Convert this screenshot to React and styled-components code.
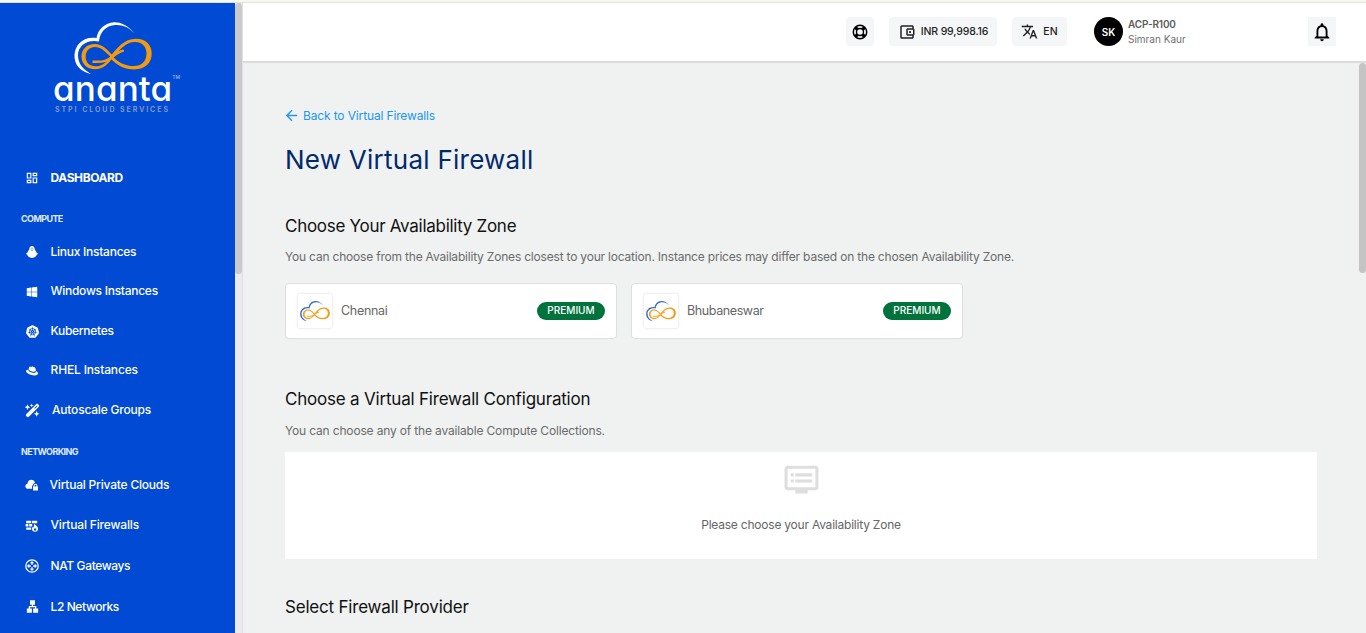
import React from 'react';
import styled, { createGlobalStyle } from 'styled-components';
import {
  MdOutlineDashboard, MdTranslate, MdNotificationsNone, MdDvr,
  MdOutlineAccountBalanceWallet, MdLan, MdArrowBack,
} from 'react-icons/md';
import { FaWindows, FaRedhat } from 'react-icons/fa';
import { FaWandMagicSparkles } from 'react-icons/fa6';
import { SiKubernetes } from 'react-icons/si';

const Global = createGlobalStyle`
  * { box-sizing: border-box; }
  html, body { margin: 0; height: 100%; overflow: hidden; }
  body { font-family: Inter, "Liberation Sans", sans-serif; background: #f0f2f2; }
  svg { display: block; flex: none; }
`;

const Page = styled.div`
  height: 633px;
  display: flex;
  flex-direction: column;
`;
const TopStrip = styled.div`
  flex: none;
  height: 3px;
  background: #f7f9f0;
  border-bottom: 1px solid #dfe4d0;
`;
const Shell = styled.div`
  flex: 1;
  min-height: 0;
  display: flex;
`;
const Sidebar = styled.aside`
  width: 235px;
  flex: none;
  background: #004ad4;
  color: #fff;
  overflow: hidden;
`;
const Track = styled.div`
  flex: none;
  width: ${(p) => p.$w}px;
  background: ${(p) => p.$bg};
`;
const Thumb = styled.div`
  height: ${(p) => p.$h}px;
  background: ${(p) => p.$c};
  border-radius: 4px;
`;
const Brand = styled.div`
  height: 159px;
  padding: 19px 0 0 53px;
`;
const BrandMark = styled.div`
  padding-left: 21px;
  height: 51px;
`;
const BrandName = styled.div`
  display: flex;
  height: 30px;
  font-size: 35px;
  line-height: 30px;
  font-weight: 500;
  font-feature-settings: "cv11";
  letter-spacing: 0.1px;
`;
const Tm = styled.span`
  font-size: 5px;
  line-height: 8px;
  letter-spacing: 0;
  color: #9dbcf2;
`;
const BrandTag = styled.div`
  margin-top: 2px;
  padding-left: 2px;
  font-size: 7px;
  line-height: 9px;
  font-weight: 600;
  letter-spacing: 1.95px;
  color: #8c9fc6;
  white-space: nowrap;
`;
const NavGroup = styled.div`
  display: flex;
  flex-direction: column;
`;
const NavItem = styled.a`
  display: flex;
  align-items: center;
  height: ${(p) => p.$h || 39.5}px;
  padding-left: 24px;
  font-size: 12px;
  font-weight: ${(p) => (p.$bold ? 700 : 500)};
  letter-spacing: ${(p) => p.$ls || 0}px;
  white-space: nowrap;
`;
const NavText = styled.span`
  padding-bottom: 1.5px;
`;
const IconSlot = styled.span`
  width: 16px;
  margin-right: ${(p) => p.$gap || 10.5}px;
  display: flex;
  justify-content: center;
`;
const NavLabel = styled.div`
  height: ${(p) => p.$h}px;
  padding: ${(p) => p.$pt}px 0 0 21px;
  font-size: 9px;
  line-height: 12px;
  font-weight: 700;
  letter-spacing: -0.6px;
  color: #dfe9fb;
`;
const Main = styled.main`
  flex: 1;
  min-width: 0;
  display: flex;
  flex-direction: column;
  border-left: 1px solid #dfe1e6;
`;
const Header = styled.header`
  flex: none;
  height: 60px;
  background: #fff;
  border-bottom: 2px solid #dcdcdc;
  display: flex;
  align-items: center;
  padding: 0 30px 1px 603px;
`;
const Chip = styled.div`
  height: 29px;
  width: ${(p) => p.$w}px;
  margin-right: ${(p) => p.$mr || 0}px;
  display: flex;
  align-items: center;
  justify-content: center;
  gap: 5px;
  background: #f5f6f8;
  border-radius: ${(p) => (p.$square ? 0 : 4)}px;
  font-size: 10.5px;
  font-weight: 500;
  letter-spacing: ${(p) => p.$ls || 0}px;
  color: #222;
  white-space: nowrap;
`;
const Avatar = styled.div`
  width: 29px;
  height: 29px;
  border-radius: 50%;
  background: #000;
  color: #fff;
  font-size: 10px;
  font-weight: 600;
  display: flex;
  align-items: center;
  justify-content: center;
`;
const User = styled.div`
  flex: 1;
  padding-left: 5px;
  font-size: 10px;
  line-height: 15px;
  color: #707070;
`;
const UserId = styled.div`
  font-weight: 600;
  letter-spacing: -0.15px;
  color: #5c5c5c;
`;
const Body = styled.div`
  flex: 1;
  min-height: 0;
  display: flex;
`;
const Content = styled.div`
  flex: 1;
  padding: 43px 42px 0;
  overflow: hidden;
`;
const Back = styled.a`
  display: flex;
  align-items: center;
  gap: 3px;
  height: 18px;
  margin-left: -2px;
  font-size: 12px;
  letter-spacing: -0.14px;
  color: #2196f3;
`;
const Title = styled.h1`
  margin: 19px 0 0;
  font-size: 26px;
  line-height: 34px;
  font-weight: 400;
  letter-spacing: 0.25px;
  color: #022a6b;
`;
const Heading = styled.h2`
  margin: ${(p) => p.$mt}px 0 0;
  font-size: 17px;
  line-height: 24px;
  font-weight: 400;
  letter-spacing: ${(p) => p.$ls || 0}px;
  color: #111;
`;
const Note = styled.p`
  margin: ${(p) => p.$mt || 10}px 0 0;
  font-size: 12px;
  line-height: 18px;
  letter-spacing: ${(p) => p.$ls || 0}px;
  color: #6b6b6b;
  white-space: nowrap;
`;
const Zones = styled.div`
  display: flex;
  gap: 14px;
  margin-top: 17px;
`;
const ZoneCard = styled.div`
  width: 332px;
  height: 56px;
  padding: 0 11px 0 12px;
  display: flex;
  align-items: center;
  background: #fff;
  border: 1px solid #dcdedf;
  border-radius: 4px;
`;
const ZoneLogo = styled.div`
  width: 34px;
  height: 34px;
  display: flex;
  align-items: center;
  justify-content: center;
  border-radius: 2px;
  box-shadow: 0 0 3px rgba(0, 0, 0, 0.16);
`;
const ZoneName = styled.div`
  flex: 1;
  padding: 0 0 2px 9px;
  font-size: 12.5px;
  letter-spacing: ${(p) => p.$ls}px;
  color: #666;
`;
const Badge = styled.div`
  width: 68px;
  height: 18px;
  border-radius: 9px;
  background: #00723c;
  color: #fff;
  font-size: 10px;
  line-height: 17px;
  font-weight: 500;
  text-align: center;
`;
const Empty = styled.div`
  width: 1032px;
  height: 107px;
  margin-top: 12px;
  padding-top: 9px;
  display: flex;
  flex-direction: column;
  align-items: center;
  background: #fff;
  color: #dedede;
`;
const EmptyText = styled.div`
  margin-top: 18px;
  font-size: 12px;
  line-height: 18px;
  letter-spacing: -0.22px;
  color: #666;
`;

const CloudLoop = ({ width, cloud, loop }) => (
  <svg width={width} height={(width * 52) / 78} viewBox="0 0 78 52">
    <path fill={cloud} d="M61 12C54 3 46 0 40 .3C31 1 24 7 22.500 16C10 14 1 22 .5 33C0 43 7 50 17 52C9 47 4 42 4 33C4 24 13 17 25 19.500C26 9 33 3.500 41 3C48 2.500 55 5 61 12Z" />
    <path fill={loop} fillRule="evenodd" d="M39.500 34.500C33 27 28 22 21 22C12.500 22 7.500 27.500 7.500 34.500C7.500 42 13 47.200 21 47.200C29 47.200 34.500 42 39.500 34.500ZM36.500 35C32 41 27.500 44.300 21.500 44.300C15.500 44.300 11.700 40.500 11.700 34.500C11.700 29 15.500 25 21 25C26.500 25 31 29 36.500 35Z" />
    <path fill={loop} fillRule="evenodd" d="M35.500 35.500C43 26 50 16.700 62 16.700C71.500 16.700 77.700 22.500 77.700 31.500C77.700 41 71 47.400 60.500 47.400C50 47.400 43 43.500 35.500 35.500ZM39 35C46 41.500 52 44 59.500 44C67.500 44 72.500 39.500 72.500 31.500C72.500 24.500 68 20 61 20C52 20 46 27.500 39 35Z" />
    <path fill="none" stroke={loop} strokeWidth="2.500" strokeLinecap="round" d="M19.500 39.700C30 40.300 34 38.500 38.500 34.800C42 32 45 29.500 48.800 28.800" />
  </svg>
);

const LifebuoyIcon = () => (
  <svg width="16" height="16" viewBox="0 0 16 16" fill="none" stroke="#000">
    <circle cx="8" cy="8" r="6.700" strokeWidth="1.500" />
    <circle cx="8" cy="8" r="3.500" strokeWidth="1.400" />
    <path strokeWidth="3.200" d="M3.300 3.300L5.500 5.500M12.700 3.300L10.500 5.500M3.300 12.700L5.500 10.500M12.700 12.700L10.500 10.500" />
  </svg>
);
const PenguinIcon = () => (
  <svg width="12" height="12" viewBox="0 0 12 12">
    <path fill="#fff" d="M6 0C4.200 0 3.300 1.400 3.300 3C3.300 4 1.900 4.900 1.500 6.400L.2 7.500C-.1 8 .5 8.500 1.200 8.600C1.400 10.300 3.200 12 6 12S10.600 10.300 10.800 8.600C11.500 8.500 12.100 8 11.800 7.500L10.500 6.400C10.100 4.900 8.700 4 8.700 3C8.700 1.400 7.800 0 6 0Z" />
    <path fill="#004ad4" d="M4.700 2.600h.9v1h-.9zM6.400 2.600h.9v1h-.9zM5 4.100h2L6 4.800z" />
  </svg>
);
const CloudLockIcon = () => (
  <svg width="14" height="12" viewBox="0 0 14 12">
    <path fill="#fff" d="M7 9.800H3.200C1.300 9.800.4 8.600.4 7.200C.4 5.900 1.400 5 2.500 4.800C2.700 2.300 4.200.8 6.200.8C8.200.8 9.600 2 10 4C8.600 4.300 7.600 5.300 7.600 6.600C7.100 6.900 7 7.300 7 8Z" />
    <path fill="#fff" fillRule="evenodd" d="M8 7.400h.6v-.7a1.900 1.900 0 0 1 3.800 0v.7h.6v4.200H8zM9.600 7.400h1.800v-.7a.9.900 0 0 0-1.800 0z" />
  </svg>
);
const FirewallIcon = () => (
  <svg width="14" height="12" viewBox="0 0 14 12">
    <path fill="#fff" d="M1.200.8h5v2.400h-5zM7 .8h5.200v2.400H7zM.6 4h2.800v2.500H.6zM4.200 4h3v2.500h-3zM1.200 7.400h5v2.400h-5z" />
    <path fill="#fff" fillRule="evenodd" d="M9.600 3.800c.4 1.300 3.400 2.400 3.400 5A3 3 0 0 1 7 8.800c0-1 .5-1.800 1.200-2.400c.1.600.3.900.7 1.100c-.1-1.400 0-2.700.7-3.700zM10.100 7.800l-1.200 1.800a1.200 1.200 0 0 0 2.400 0z" />
  </svg>
);
const GatewayIcon = () => (
  <svg width="14" height="14" viewBox="0 0 14 14">
    <circle cx="7" cy="7" r="6.200" fill="none" stroke="#fff" strokeWidth="1.300" />
    <path fill="#fff" d="M7 1.900L9.200 4.300H7.700V5.800H6.300V4.300H4.800zM7 12.100L4.800 9.700H6.300V8.200H7.700V9.700H9.200zM1.900 7L4.300 4.800V6.300H5.800V7.700H4.300V9.200zM12.100 7L9.700 9.200V7.700H8.200V6.300H9.700V4.800z" />
  </svg>
);

const compute = [
  { label: 'Linux Instances', icon: <PenguinIcon />, ls: -0.26 },
  { label: 'Windows Instances', icon: <FaWindows size={12} />, ls: -0.27 },
  { label: 'Kubernetes', icon: <SiKubernetes size={13} />, ls: -0.3 },
  { label: 'RHEL Instances', icon: <FaRedhat size={12} />, ls: -0.15 },
  { label: 'Autoscale Groups', icon: <FaWandMagicSparkles size={15} />, gap: 12, ls: -0.2 },
];
const networking = [
  { label: 'Virtual Private Clouds', icon: <CloudLockIcon />, gap: 9.5, ls: -0.2 },
  { label: 'Virtual Firewalls', icon: <FirewallIcon />, ls: -0.17 },
  { label: 'NAT Gateways', icon: <GatewayIcon />, ls: -0.37 },
  { label: 'L2 Networks', icon: <MdLan size={15} />, ls: -0.4 },
];

const NavList = ({ items, h }) => (
  <NavGroup>
    {items.map((i) => (
      <NavItem key={i.label} $h={h} $ls={i.ls}>
        <IconSlot $gap={i.gap}>{i.icon}</IconSlot>
        <NavText>{i.label}</NavText>
      </NavItem>
    ))}
  </NavGroup>
);

const Zone = ({ name, ls }) => (
  <ZoneCard>
    <ZoneLogo><CloudLoop width={30} cloud="#2a66d9" loop="#f79a10" /></ZoneLogo>
    <ZoneName $ls={ls}>{name}</ZoneName>
    <Badge>PREMIUM</Badge>
  </ZoneCard>
);

export default function App() {
  return (
    <Page>
      <Global />
      <TopStrip />
      <Shell>
        <Sidebar>
          <Brand>
            <BrandMark><CloudLoop width={78} cloud="#fff" loop="#f59a0c" /></BrandMark>
            <BrandName>ananta<Tm>TM</Tm></BrandName>
            <BrandTag>STPI CLOUD SERVICES</BrandTag>
          </Brand>
          <NavItem $h={32} $bold $ls={-0.4}>
            <IconSlot><MdOutlineDashboard size={14} /></IconSlot>
            <NavText>DASHBOARD</NavText>
          </NavItem>
          <NavLabel $h={38.25} $pt={19}>COMPUTE</NavLabel>
          <NavList items={compute} h={39.5} />
          <NavLabel $h={35} $pt={16.5}>NETWORKING</NavLabel>
          <NavList items={networking} h={40.6} />
        </Sidebar>
        <Track $w={7} $bg="#ebebec"><Thumb $h={271} $c="#cacaca" /></Track>
        <Main>
          <Header>
            <Chip $w={28} $mr={15}><LifebuoyIcon /></Chip>
            <Chip $w={108} $mr={15} $ls={-0.15}><MdOutlineAccountBalanceWallet size={18} />INR 99,998.16</Chip>
            <Chip $w={55} $mr={27}><MdTranslate size={17} />EN</Chip>
            <Avatar>SK</Avatar>
            <User><UserId>ACP-R100</UserId>Simran Kaur</User>
            <Chip $w={28} $square><MdNotificationsNone size={22} color="#000" /></Chip>
          </Header>
          <Body>
            <Content>
              <Back><MdArrowBack size={17} />Back to Virtual Firewalls</Back>
              <Title>New Virtual Firewall</Title>
              <Heading $mt={37} $ls={-0.28}>Choose Your Availability Zone</Heading>
              <Note $ls={-0.197}>You can choose from the Availability Zones closest to your location. Instance prices may differ based on the chosen Availability Zone.</Note>
              <Zones><Zone name="Chennai" ls={-0.3} /><Zone name="Bhubaneswar" ls={-0.4} /></Zones>
              <Heading $mt={48} $ls={-0.2}>Choose a Virtual Firewall Configuration</Heading>
              <Note $mt={11} $ls={-0.165}>You can choose any of the available Compute Collections.</Note>
              <Empty>
                <MdDvr size={37} />
                <EmptyText>Please choose your Availability Zone</EmptyText>
              </Empty>
              <Heading $mt={36} $ls={-0.2}>Select Firewall Provider</Heading>
            </Content>
            <Track $w={7} $bg="#f0f1f1"><Thumb $h={210} $c="#c4c4c4" /></Track>
          </Body>
        </Main>
      </Shell>
    </Page>
  );
}
